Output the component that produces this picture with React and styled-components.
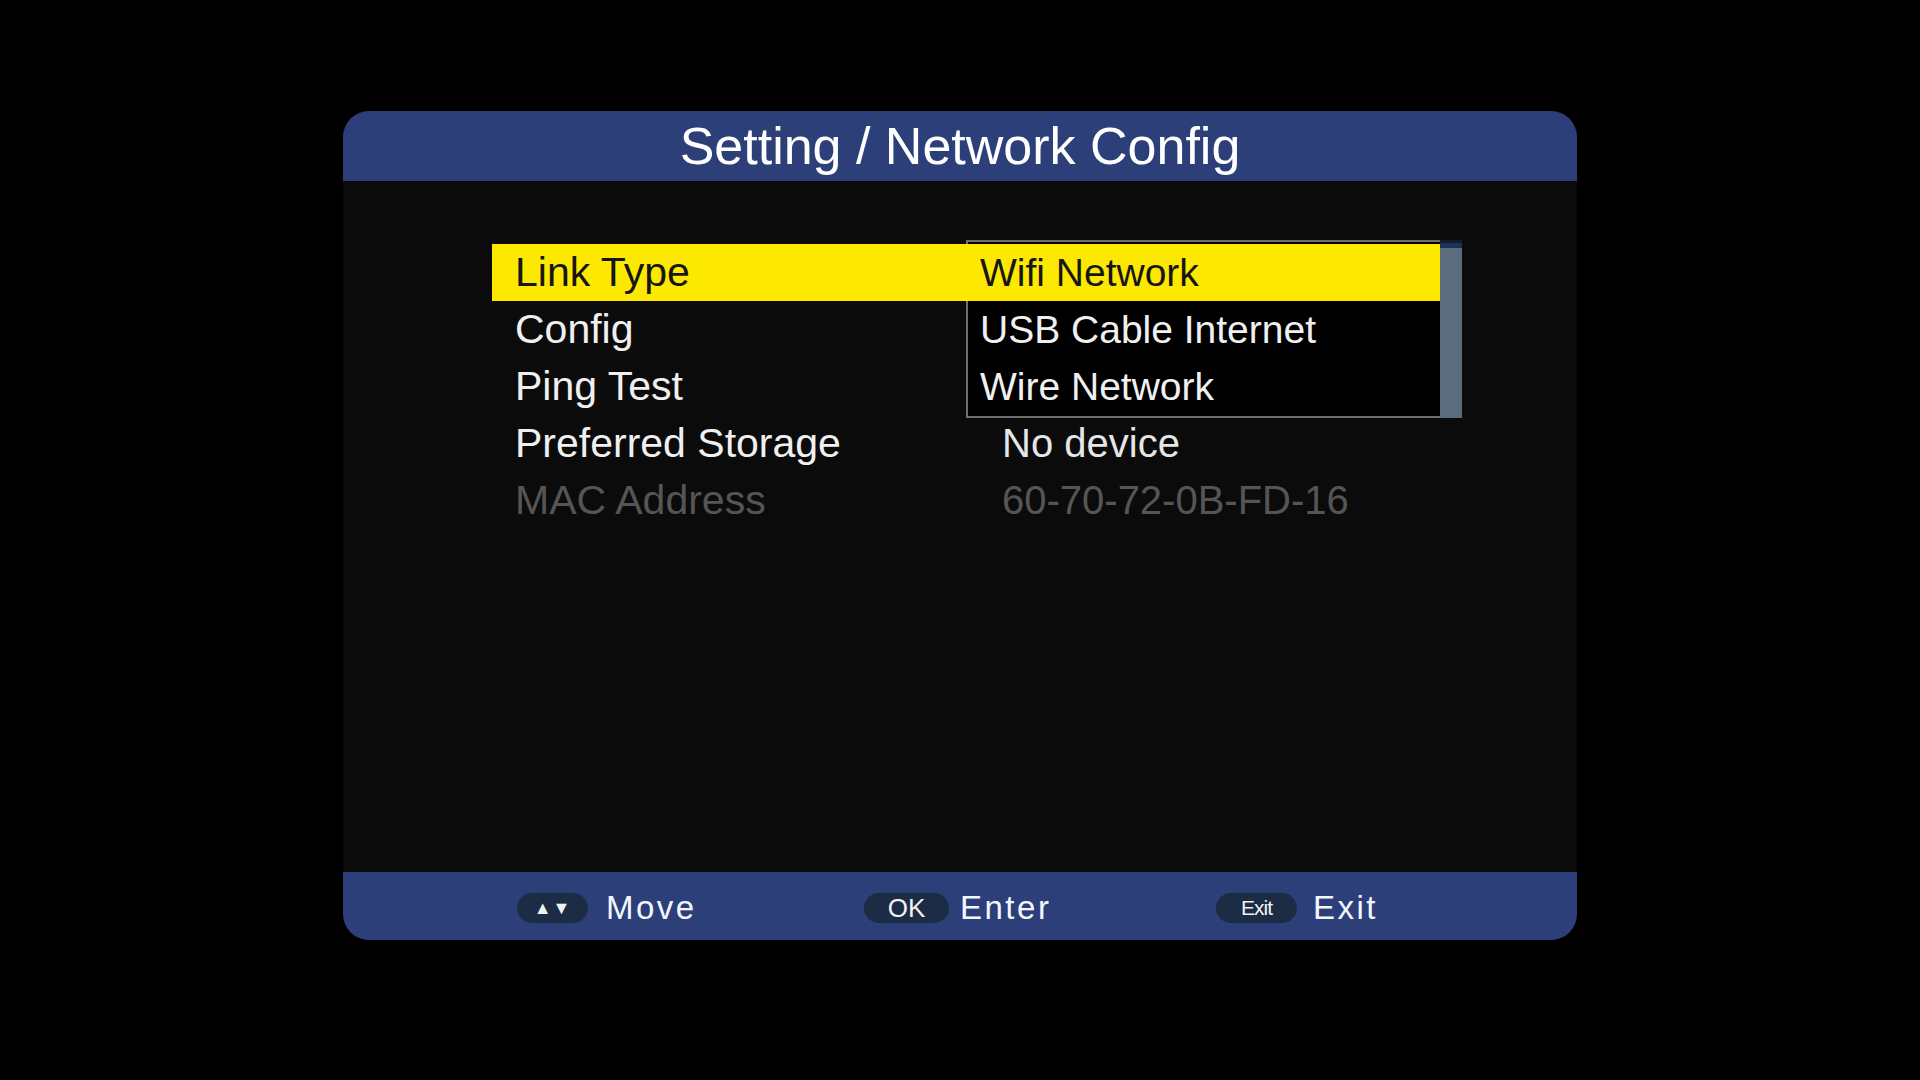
import React from 'react';
import styled, { createGlobalStyle } from 'styled-components';

const GlobalStyle = createGlobalStyle`
  html, body {
    margin: 0;
    padding: 0;
    background: #000;
    font-family: "Liberation Sans", Arial, sans-serif;
  }
`;

const Screen = styled.div`
  width: 1920px;
  height: 1080px;
  padding-top: 111px;
  box-sizing: border-box;
  display: flex;
  justify-content: center;
  background: #000;
`;

const Panel = styled.div`
  width: 1234px;
  height: 829px;
  border-radius: 26px;
  overflow: hidden;
  display: flex;
  flex-direction: column;
  background: #0b0b0b;
`;

const Header = styled.div`
  height: 70px;
  background: #2c3f78;
  display: flex;
  align-items: center;
  justify-content: center;
`;

const Title = styled.h1`
  margin: 0;
  color: #fff;
  font-size: 52px;
  font-weight: normal;
  line-height: 1;
`;

const Body = styled.div`
  flex: 1;
  padding: 63px 0 0 149px;
`;

const Menu = styled.div`
  position: relative;
  width: 947px;
`;

const Row = styled.div`
  height: 57px;
  display: grid;
  grid-template-columns: 510px 1fr;
  align-items: center;
  background: ${p => (p.$active ? '#fde800' : 'transparent')};
  font-size: 41px;
  color: ${p => (p.$active ? '#161616' : p.$dim ? '#555' : '#f0f0f0')};
`;

const Label = styled.span`
  padding-left: 23px;
`;

const Value = styled.span`
  font-size: 40px;
  color: ${p => (p.$dim ? '#555' : '#e6e6e6')};
`;

const Dropdown = styled.div`
  position: absolute;
  left: 474px;
  top: -4px;
  width: 496px;
  height: 178px;
  display: flex;
`;

const Options = styled.div`
  flex: 1;
  background: #000;
  border: 2px solid #6e6e6e;
  border-right: none;
  padding-top: 2px;
`;

const Option = styled.div`
  height: 57px;
  display: flex;
  align-items: center;
  padding-left: ${p => (p.$active ? 14 : 12)}px;
  margin-left: ${p => (p.$active ? -2 : 0)}px;
  font-size: 39px;
  background: ${p => (p.$active ? '#fde800' : 'transparent')};
  color: ${p => (p.$active ? '#161616' : '#f0f0f0')};
`;

const Scrollbar = styled.div`
  width: 22px;
  background: #5b6d7d;
  border-top: 3px solid #151b24;
  box-shadow: inset 0 5px 0 #1a3158;
`;

const Footer = styled.div`
  height: 68px;
  background: #2c3f78;
  display: grid;
  grid-template-columns: 347px 347px 347px;
  padding-left: 174px;
  align-items: center;
  padding-top: 4px;
  box-sizing: border-box;
`;

const Hint = styled.div`
  display: flex;
  align-items: center;
  gap: ${p => p.$gap}px;
  margin-left: ${p => p.$shift || 0}px;
`;

const Key = styled.span`
  width: ${p => p.$w}px;
  height: 30px;
  border-radius: 15px;
  background: #1b2c44;
  color: #f2f2f2;
  display: flex;
  align-items: center;
  justify-content: center;
  font-size: ${p => p.$size}px;
  letter-spacing: ${p => p.$ls || 0}px;
`;

const HintText = styled.span`
  color: #f4f6ff;
  font-size: 33px;
  letter-spacing: 2.5px;
`;

const rows = [
  { label: 'Link Type', value: '', active: true },
  { label: 'Config', value: '' },
  { label: 'Ping Test', value: '' },
  { label: 'Preferred Storage', value: 'No device' },
  { label: 'MAC Address', value: '60-70-72-0B-FD-16', dim: true },
];

const options = ['Wifi Network', 'USB Cable Internet', 'Wire Network'];

export default function App() {
  return (
    <>
      <GlobalStyle />
      <Screen>
        <Panel>
          <Header>
            <Title>Setting / Network Config</Title>
          </Header>
          <Body>
            <Menu>
              {rows.map(r => (
                <Row key={r.label} $active={r.active} $dim={r.dim}>
                  <Label>{r.label}</Label>
                  <Value $dim={r.dim}>{r.value}</Value>
                </Row>
              ))}
              <Dropdown>
                <Options>
                  {options.map((o, i) => (
                    <Option key={o} $active={i === 0}>{o}</Option>
                  ))}
                </Options>
                <Scrollbar />
              </Dropdown>
            </Menu>
          </Body>
          <Footer>
            <Hint $gap={18}>
              <Key $w={71} $size={18} $ls={1}>▲▼</Key>
              <HintText>Move</HintText>
            </Hint>
            <Hint $gap={11}>
              <Key $w={85} $size={26}>OK</Key>
              <HintText>Enter</HintText>
            </Hint>
            <Hint $gap={16} $shift={5}>
              <Key $w={81} $size={21} $ls={-1}>Exit</Key>
              <HintText>Exit</HintText>
            </Hint>
          </Footer>
        </Panel>
      </Screen>
    </>
  );
}
